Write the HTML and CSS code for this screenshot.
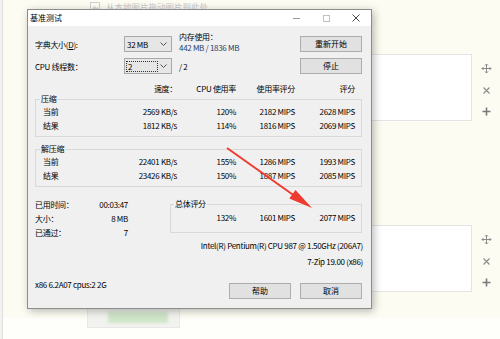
FILE: index.html
```html
<!DOCTYPE html>
<html lang="zh-CN">
<head>
<meta charset="utf-8">
<title>基准测试</title>
<link rel="stylesheet" href="styles.css">
</head>
<body>
<div class="strip"></div>
<main class="page">
  <div class="drop-hint">
    <svg width="10" height="9" viewBox="0 0 10 9"><rect x=".5" y=".5" width="9" height="8" fill="none" stroke="#cfcfcf"/><path d="M2 7l2.5-3 2 2 1-1 1 2z" fill="#d6d6d6"/></svg>
    <span>从本地图片拖动图片到此处</span>
  </div>
  <div class="card-row first">
    <div class="card"></div>
    <div class="tools">
      <svg class="tool" viewBox="0 0 11 11" fill="none" stroke="#8a8a8a" stroke-width="1"><path d="M5.5 1v9M1 5.5h9"/><path d="M4 2.5l1.5-1.5 1.5 1.5M4 8.5l1.5 1.5 1.5-1.5M2.5 4L1 5.5 2.5 7M8.5 4L10 5.5 8.5 7"/></svg>
      <svg class="tool" viewBox="0 0 11 11"><path d="M2.5 2.5l6 6M8.5 2.5l-6 6" stroke="#8a8a8a" stroke-width="1.1"/></svg>
      <svg class="tool" viewBox="0 0 11 11"><path d="M5.5 1.5v8M1.5 5.5h8" stroke="#7a7a7a" stroke-width="1.6"/></svg>
    </div>
  </div>
  <div class="card-row second">
    <div class="card"></div>
    <div class="tools">
      <svg class="tool" viewBox="0 0 11 11" fill="none" stroke="#8a8a8a" stroke-width="1"><path d="M5.5 1v9M1 5.5h9"/><path d="M4 2.5l1.5-1.5 1.5 1.5M4 8.5l1.5 1.5 1.5-1.5M2.5 4L1 5.5 2.5 7M8.5 4L10 5.5 8.5 7"/></svg>
      <svg class="tool" viewBox="0 0 11 11"><path d="M2.5 2.5l6 6M8.5 2.5l-6 6" stroke="#8a8a8a" stroke-width="1.1"/></svg>
      <svg class="tool" viewBox="0 0 11 11"><path d="M5.5 1.5v8M1.5 5.5h8" stroke="#7a7a7a" stroke-width="1.6"/></svg>
    </div>
  </div>
  <div class="thumb"><div class="thumb-green"></div></div>
</main>

<div class="window">
  <div class="titlebar">
    <span class="title">基准测试</span>
    <span class="wbtn"><svg width="7" height="1"><rect width="7" height="1" fill="#9a9a9a"/></svg></span>
    <span class="wbtn"><svg width="7" height="7"><rect x=".5" y=".5" width="6" height="6" fill="none" stroke="#c2c2c2"/></svg></span>
    <span class="wbtn"><svg width="8" height="8"><path d="M.5.5l7 7M7.5.5l-7 7" stroke="#333" stroke-width=".9"/></svg></span>
  </div>
  <div class="client">
    <div class="ctl-row">
      <span class="lbl">字典大小(<u>D</u>):</span>
      <div class="combo"><span>32 MB</span><svg width="7" height="4" viewBox="0 0 7 4"><polyline points="0.5,0.5 3.5,3.5 6.5,0.5" fill="none" stroke="#555" stroke-width="1"/></svg></div>
      <div class="after mem"><div>内存使用：</div><div class="memval">442 MB / 1836 MB</div></div>
      <button class="btn">重新开始</button>
    </div>
    <div class="ctl-row">
      <span class="lbl">CPU 线程数：</span>
      <div class="combo focus"><span class="focus-box">2</span><svg width="7" height="4" viewBox="0 0 7 4"><polyline points="0.5,0.5 3.5,3.5 6.5,0.5" fill="none" stroke="#555" stroke-width="1"/></svg></div>
      <div class="after">/ 2</div>
      <button class="btn">停止</button>
    </div>

    <div class="cols head"><span></span><span>速度：</span><span>CPU 使用率</span><span>使用率评分</span><span>评分</span></div>

    <fieldset class="group">
      <legend>压缩</legend>
      <div class="cols">
        <span>当前</span><span>2569 KB/s</span><span>120%</span><span>2182 MIPS</span><span>2628 MIPS</span>
        <span>结果</span><span>1812 KB/s</span><span>114%</span><span>1816 MIPS</span><span>2069 MIPS</span>
      </div>
    </fieldset>

    <fieldset class="group second">
      <legend>解压缩</legend>
      <div class="cols">
        <span>当前</span><span>22401 KB/s</span><span>155%</span><span>1286 MIPS</span><span>1993 MIPS</span>
        <span>结果</span><span>23426 KB/s</span><span>150%</span><span>1887 MIPS</span><span>2085 MIPS</span>
      </div>
    </fieldset>

    <div class="bottom">
      <div class="stats">
        <span>已用时间：</span><span>00:03:47</span>
        <span>大小：</span><span>8 MB</span>
        <span>已通过：</span><span>7</span>
      </div>
      <fieldset class="group overall">
        <legend>总体评分</legend>
        <div class="cols3"><span>132%</span><span>1601 MIPS</span><span>2077 MIPS</span></div>
      </fieldset>
    </div>

    <div class="info">Intel(R) Pentium(R) CPU 987 @ 1.50GHz (206A7)</div>
    <div class="info zip">7-Zip 19.00 (x86)</div>

    <div class="footer">
      <span class="ver">x86 6.2A07 cpus:2 2G</span>
      <button class="btn">帮助</button>
      <button class="btn">取消</button>
    </div>
  </div>
</div>

<svg class="arrow" width="500" height="339" viewBox="0 0 500 339">
  <line x1="227" y1="148" x2="293" y2="194.8" stroke="#ee3b2f" stroke-width="2"/>
  <polygon points="312,208 289.3,198.4 295.5,189.9" fill="#ee3b2f"/>
</svg>
</body>
</html>
```

FILE: styles.css
```css
* { box-sizing: border-box; }
html, body { margin: 0; padding: 0; }
body {
  width: 500px;
  height: 339px;
  overflow: hidden;
  position: relative;
  display: flex;
  background: linear-gradient(#fcfcf3 0, #fcfcf3 318px, #fefefb 318px);
  font-family: "Noto Sans CJK SC", "Noto Sans", sans-serif;
  font-size: 8px;
  color: #1a1a1a;
}

/* background page */
.strip { width: 3px; flex: none; background: #f3f3f0; border-right: 1px solid #dedede; }
.page { flex: 1; display: flex; flex-direction: column; }
.drop-hint {
  height: 12px;
  padding-left: 87px;
  display: flex;
  align-items: center;
  gap: 6px;
  color: #c8c8c8;
  font-size: 8.5px;
  line-height: 12px;
}
.card-row { display: flex; }
.card-row.first { margin-top: 42px; }
.card-row.second { margin-top: 104px; }
.card { flex: 1; margin-left: 80px; height: 67px; background: #fff; border: 1px solid #e4e4e4; }
.tools { width: 28px; display: flex; flex-direction: column; align-items: center; padding-top: 9px; gap: 10.5px; }
.tool { width: 11px; height: 11px; display: block; }
.thumb {
  margin: 16px 0 0 84px;
  width: 93px;
  height: 20px;
  background: #f2f2ef;
  border: 1px solid #e8e8e6;
  padding: 3px 0 0 20px;
}
.thumb-green { width: 60px; height: 11px; background: #cfe6c9; filter: blur(1.5px); }

/* dialog window */
.window {
  position: absolute;
  left: 27px;
  top: 9px;
  width: 345px;
  height: 300px;
  border: 1px solid #8d8d8d;
  background: #f0f0f0;
  box-shadow: 2px 2px 8px rgba(0, 0, 0, .28);
  display: flex;
  flex-direction: column;
  letter-spacing: -0.3px;
  color: #000;
}
.titlebar { height: 16px; flex: none; background: #fff; display: flex; align-items: center; }
.title { flex: 1; padding-left: 2px; line-height: 16px; letter-spacing: 0; }
.wbtn { width: 30px; height: 16px; display: flex; align-items: center; justify-content: center; }
.wbtn svg { display: block; }

.client { flex: 1; padding: 10px 9px 0 7px; display: flex; flex-direction: column; }

.ctl-row { display: flex; align-items: center; height: 16px; }
.ctl-row + .ctl-row { margin-top: 6px; }
.lbl { width: 89px; }
.combo {
  width: 48px;
  height: 16px;
  border: 1px solid #a9a9a9;
  background: #e6e6e6;
  display: flex;
  align-items: center;
  justify-content: space-between;
  padding: 0 4px 0 2px;
}
.combo svg { display: block; }
.focus-box { width: 32px; height: 11px; line-height: 10px; border: 1px dotted #333; padding-left: 1px; margin-left: -1px; }
.after { margin-left: 7px; flex: 1; }
.mem { align-self: flex-start; margin-top: -5px; height: 16px; line-height: 11px; }
.memval { color: #2b3f66; }
.btn {
  width: 62px;
  height: 16px;
  border: 1px solid #adadad;
  background: #e1e1e1;
  font: inherit;
  color: inherit;
  letter-spacing: 0;
  padding: 0;
  line-height: 14px;
}

.cols { display: grid; grid-template-columns: 84px 50px 59px 59px 60px; line-height: 14px; }
.cols > span { text-align: right; }
.cols > span:nth-child(5n+1) { text-align: left; }
.head { margin-top: 9px; padding-left: 8px; line-height: 12px; }

.group {
  margin: 0;
  padding: 2px 0 3px 7px;
  border: 1px solid #d9d9d9;
  min-width: 0;
}
.group legend { padding: 0 1px; margin-left: -3px; line-height: 8px; }
.group.second { margin-top: 8px; }

.bottom { display: flex; align-items: flex-start; margin-top: 11px; }
.stats { width: 93px; flex: none; display: grid; grid-template-columns: 1fr auto; line-height: 14px; }
.stats span:nth-child(even) { text-align: right; }
.group.overall { flex: 1; margin: 2px 0 0 42px; padding: 3px 0 7px 0; }
.group.overall legend { margin-left: 3px; }
.cols3 { display: grid; grid-template-columns: 65px 59px 60px; line-height: 14px; text-align: right; }

.info { text-align: right; line-height: 12px; margin-right: -1px; }
.info.zip { margin-top: 4px; }

.footer { display: flex; align-items: flex-start; margin-top: 10px; }
.ver { flex: 1; line-height: 14px; }
.footer .btn { margin-top: 5px; }
.footer .btn + .btn { margin-left: 9px; }

.arrow { position: absolute; left: 0; top: 0; pointer-events: none; }
```
